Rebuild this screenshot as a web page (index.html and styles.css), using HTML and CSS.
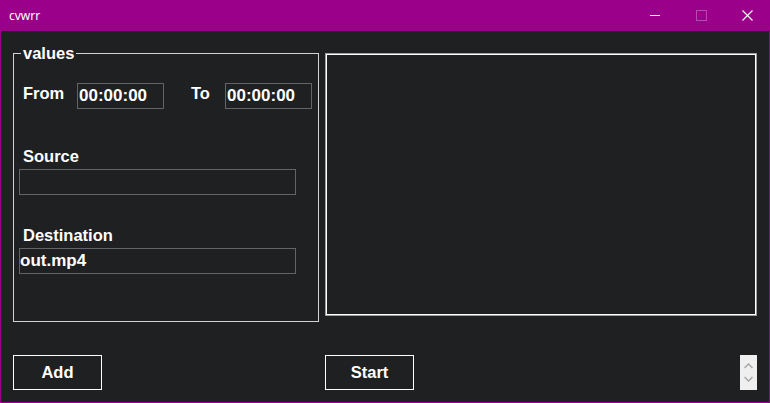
FILE: index.html
```html
<!DOCTYPE html>
<html>
<head>
<meta charset="utf-8">
<link rel="stylesheet" href="styles.css">
</head>
<body>
<div class="window">
  <header class="titlebar">
    <span class="title">cvwrr</span>
    <div class="caption-buttons">
      <span class="cbtn"><svg width="10" height="10" viewBox="0 0 10 10"><path d="M0 5.5H10" stroke="#fff" stroke-width="1"/></svg></span>
      <span class="cbtn"><svg width="11" height="11" viewBox="0 0 11 11"><rect x="0.5" y="0.5" width="10" height="10" fill="none" stroke="#b84aa9" stroke-width="1"/></svg></span>
      <span class="cbtn"><svg width="11" height="11" viewBox="0 0 11 11"><path d="M0.5 0.5L10.5 10.5M10.5 0.5L0.5 10.5" stroke="#fff" stroke-width="1.1"/></svg></span>
    </div>
  </header>
  <main class="content">
    <fieldset class="group">
      <legend class="legend">values</legend>
      <div class="range-row">
        <label class="lbl lbl-from">From</label>
        <div class="textbox time">00:00:00</div>
        <label class="lbl lbl-to">To</label>
        <div class="textbox time">00:00:00</div>
      </div>
      <div class="field field-source">
        <label class="lbl">Source</label>
        <div class="textbox wide"></div>
      </div>
      <div class="field field-dest">
        <label class="lbl">Destination</label>
        <div class="textbox wide">out.mp4</div>
      </div>
    </fieldset>
    <div class="panel"></div>
    <button class="btn">Add</button>
    <div class="bottom-right">
      <button class="btn">Start</button>
      <div class="spinner">
        <svg width="9" height="6" viewBox="0 0 9 6"><path d="M0.5 5L4.5 1L8.5 5" fill="none" stroke="#a8a8a8" stroke-width="1.5"/></svg>
        <svg width="9" height="6" viewBox="0 0 9 6"><path d="M0.5 1L4.5 5L8.5 1" fill="none" stroke="#a8a8a8" stroke-width="1.5"/></svg>
      </div>
    </div>
  </main>
</div>
</body>
</html>
```
FILE: styles.css
```css
* { box-sizing: border-box; }
html, body { margin: 0; padding: 0; background: #1f2022; }
.window {
  width: 770px;
  height: 403px;
  display: flex;
  flex-direction: column;
  border: 1px solid #9a0089;
  border-top: none;
  background: #1f2022;
  font-family: "Liberation Sans", Arial, sans-serif;
  color: #fff;
}
.titlebar {
  height: 31px;
  flex: none;
  background: #9a0089;
  display: flex;
  align-items: center;
  justify-content: space-between;
  margin: 0 -1px;
}
.title {
  font-family: "Noto Sans", "Open Sans", sans-serif;
  font-size: 12px;
  color: #fff;
  padding-left: 9px;
  padding-bottom: 1px;
}
.caption-buttons { display: flex; height: 31px; }
.cbtn {
  width: 46px;
  height: 31px;
  display: flex;
  align-items: center;
  justify-content: center;
  padding-bottom: 1px;
}
.content {
  flex: 1;
  display: grid;
  grid-template-columns: 306px 432px;
  grid-template-rows: 278px 35px;
  column-gap: 6px;
  row-gap: 33px;
  padding: 13px 12px 0 12px;
  align-items: start;
}
.group {
  margin: 0;
  height: 278px;
  border: 1px solid #d2d2d2;
  padding: 21px 0 0 5px;
  font-weight: bold;
  font-size: 16.5px;
}
.legend {
  padding: 0 2px;
  margin-left: 2px;
  line-height: 18px;
}
.lbl {
  display: block;
  line-height: 19px;
  margin-left: 4px;
}
.range-row {
  display: flex;
  align-items: flex-start;
}
.range-row .lbl { margin-top: 1px; }
.lbl-from { width: 54px; }
.lbl-to { width: 34px; margin-left: 27px; }
.textbox {
  height: 26px;
  border: 1px solid #646464;
  line-height: 24px;
  font-size: 17px;
  font-weight: bold;
  color: #fff;
  white-space: nowrap;
  overflow: hidden;
}
.time { width: 87px; padding-left: 1px; }
.wide { width: 277px; padding-left: 0; }
.field .lbl { margin-bottom: 3px; }
.field-source { margin-top: 38px; }
.field-dest { margin-top: 31px; }
.panel {
  margin-top: 9px;
  height: 263px;
  border: 1px solid #a0a0a0;
  box-shadow: inset 0 0 0 1px #ffffff;
}
.btn {
  width: 89px;
  height: 35px;
  background: transparent;
  border: 1px solid #ffffff;
  color: #fff;
  font-family: "Liberation Sans", Arial, sans-serif;
  font-weight: bold;
  font-size: 16.5px;
  padding: 0;
  margin: 0;
}
.bottom-right {
  display: flex;
  justify-content: space-between;
  align-items: flex-start;
}
.spinner {
  width: 17px;
  height: 35px;
  background: #efefef;
  display: flex;
  flex-direction: column;
  align-items: center;
  justify-content: space-around;
  padding: 4px 0;
}
```
